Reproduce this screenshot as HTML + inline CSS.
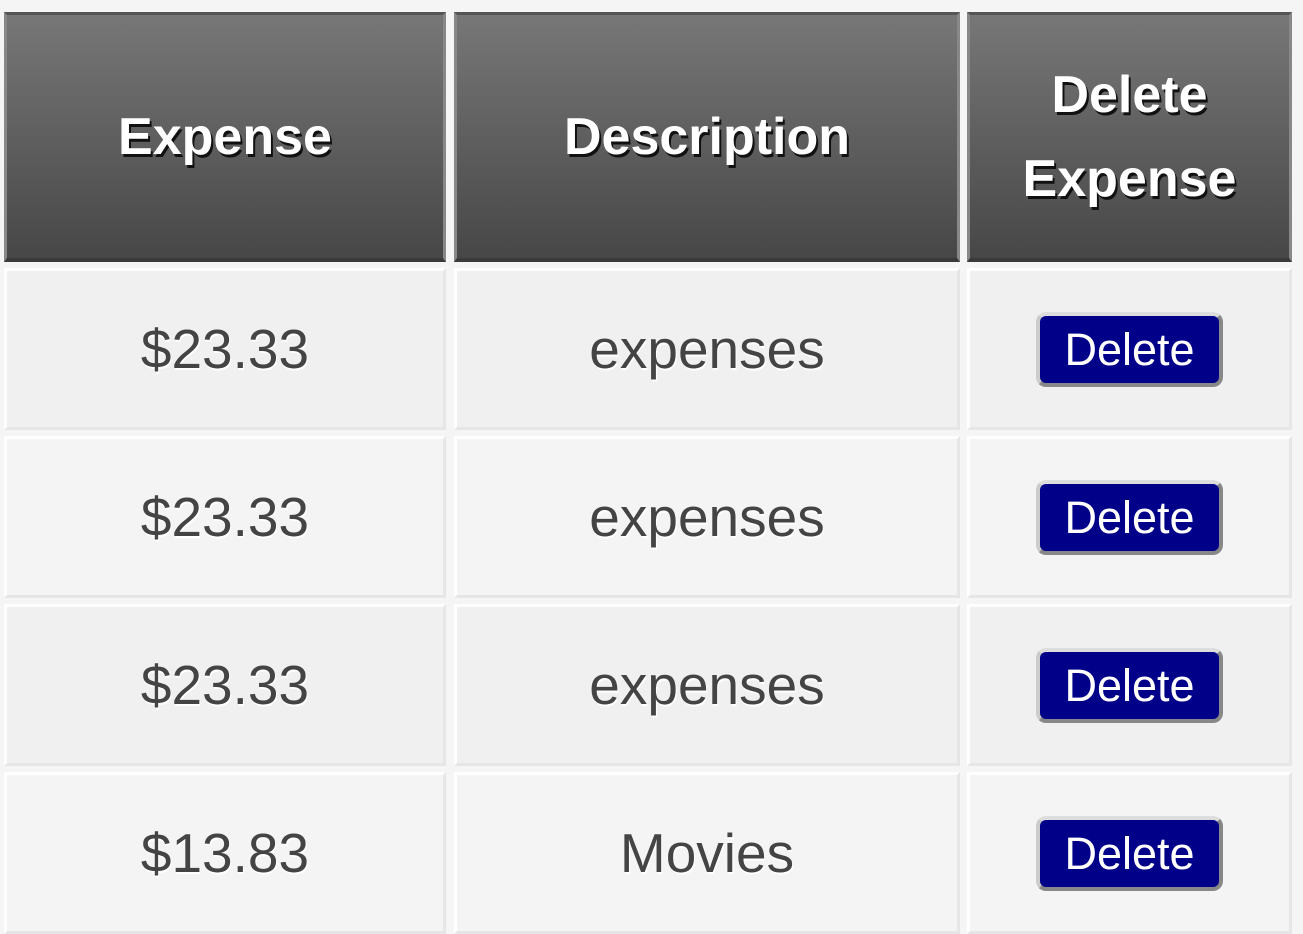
<!DOCTYPE html>
<html><head><style>
body{margin:0;width:1303px;height:932px;background:#f5f5f5;position:relative;overflow:hidden;font-family:"Liberation Sans",sans-serif}
.h{position:absolute;top:12px;height:250px;box-sizing:border-box;background:linear-gradient(#777,#474747);border-top:3px solid #555;border-left:3px solid #888;border-right:3px solid #888;border-bottom:4px solid #3a3a3a;color:#fff;font-weight:bold;font-size:52px;text-align:center;display:flex;align-items:center;justify-content:center;text-shadow:2px 3px 0 #111;line-height:84px}
.c{position:absolute;box-sizing:border-box;border:3px solid #e6e6e6;border-top-color:#fff;border-left-color:#fff;display:flex;align-items:center;justify-content:center;color:#444;font-size:55px;text-shadow:1px 2px 0 #fff}
.b{width:187px;height:75px;box-sizing:border-box;background:#000088;border-radius:10px;border:4px solid #888;border-top-color:#ddd;border-left-color:#ccc;color:#fff;font-size:45px;display:flex;align-items:center;justify-content:center;text-shadow:none;margin-left:0px;padding-top:2px}
</style></head><body>
<div class="h" style="left:4px;width:442px">Expense</div>
<div class="h" style="left:454px;width:506px">Description</div>
<div class="h" style="left:967px;width:325px">Delete<br>Expense</div>

<div class="c" style="left:4px;top:268px;width:442px;height:162px;background:#f0f0f0">$23.33</div>
<div class="c" style="left:454px;top:268px;width:506px;height:162px;background:#f0f0f0">expenses</div>
<div class="c" style="left:967px;top:268px;width:325px;height:162px;background:#f0f0f0"><div class="b">Delete</div></div>

<div class="c" style="left:4px;top:436px;width:442px;height:162px;background:#f4f4f4">$23.33</div>
<div class="c" style="left:454px;top:436px;width:506px;height:162px;background:#f4f4f4">expenses</div>
<div class="c" style="left:967px;top:436px;width:325px;height:162px;background:#f4f4f4"><div class="b">Delete</div></div>

<div class="c" style="left:4px;top:604px;width:442px;height:162px;background:#f0f0f0">$23.33</div>
<div class="c" style="left:454px;top:604px;width:506px;height:162px;background:#f0f0f0">expenses</div>
<div class="c" style="left:967px;top:604px;width:325px;height:162px;background:#f0f0f0"><div class="b">Delete</div></div>

<div class="c" style="left:4px;top:772px;width:442px;height:162px;background:#f4f4f4">$13.83</div>
<div class="c" style="left:454px;top:772px;width:506px;height:162px;background:#f4f4f4">Movies</div>
<div class="c" style="left:967px;top:772px;width:325px;height:162px;background:#f4f4f4"><div class="b">Delete</div></div>
</body></html>
